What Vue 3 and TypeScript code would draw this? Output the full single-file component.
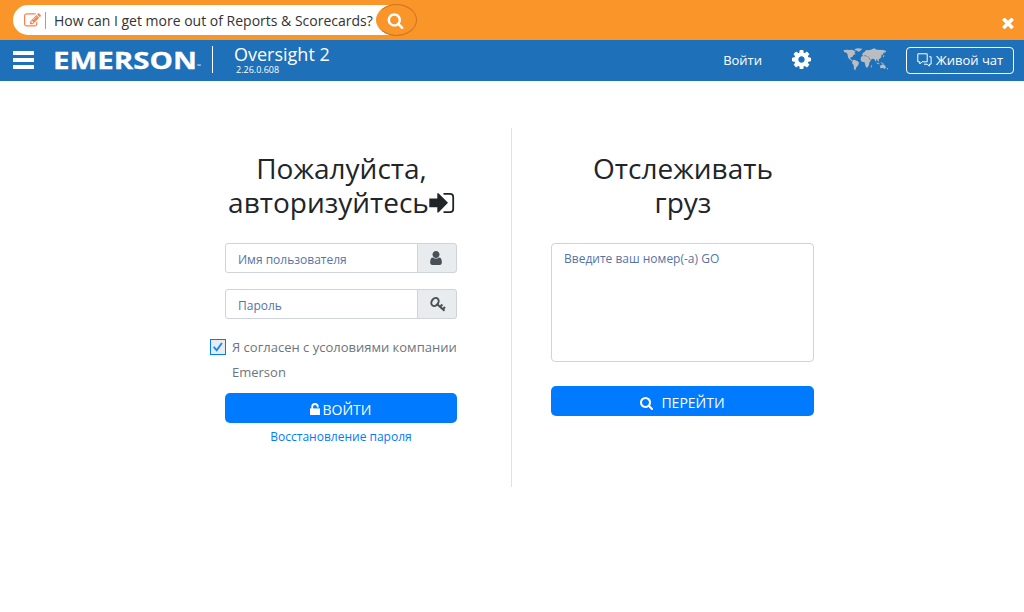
<script setup lang="ts">
import { ref } from 'vue'

const username = ref('')
const password = ref('')
const shipmentNumbers = ref('')
const agreed = ref(true)
const bannerOpen = ref(true)

const icons = {
  search: 'M1216 832q0-185-131.5-316.5t-316.5-131.5-316.5 131.5-131.5 316.5 131.5 316.5 316.5 131.5 316.5-131.5 131.5-316.5zm512 832q0 52-38 90t-90 38q-54 0-90-38l-343-342q-179 124-399 124-143 0-273.5-55.5t-225-150-150-225-55.5-273.5 55.5-273.5 150-225 225-150 273.5-55.5 273.5 55.5 225 150 150 225 55.5 273.5q0 220-124 399l343 343q37 37 37 90z',
  cog: 'M1152 896q0-106-75-181t-181-75-181 75-75 181 75 181 181 75 181-75 75-181zm512-109v222q0 12-8 23t-20 13l-185 28q-19 54-39 91 35 50 107 138 10 12 10 25t-9 23q-27 37-99 108t-94 71q-12 0-26-9l-138-108q-44 23-91 38-16 136-29 186-7 28-36 28h-222q-14 0-24.5-8.5t-11.5-21.5l-28-184q-49-16-90-37l-141 107q-10 9-25 9-14 0-25-11-126-114-165-168-7-10-7-23 0-12 8-23 15-21 51-66.5t54-70.5q-27-50-41-99l-183-27q-13-2-21-12.5t-8-23.5v-222q0-12 8-23t19-13l186-28q14-46 39-92-40-57-107-138-10-12-10-24 0-10 9-23 26-36 98.5-107.5t94.5-71.5q13 0 26 10l138 107q44-23 91-38 16-136 29-186 7-28 36-28h222q14 0 24.5 8.5t11.5 21.5l28 184q49 16 90 37l142-107q9-9 24-9 13 0 25 10 129 119 165 170 7 8 7 22 0 12-8 23-15 21-51 66.5t-54 70.5q26 50 41 98l183 28q13 2 21 12.5t8 23.5z',
  times: 'M1490 1322q0 40-28 68l-136 136q-28 28-68 28t-68-28l-294-294-294 294q-28 28-68 28t-68-28l-136-136q-28-28-28-68t28-68l294-294-294-294q-28-28-28-68t28-68l136-136q28-28 68-28t68 28l294 294 294-294q28-28 68-28t68 28l136 136q28 28 28 68t-28 68l-294 294 294 294q28 28 28 68z',
  user: 'M1536 1399q0 109-62.5 187t-150.5 78h-854q-88 0-150.5-78t-62.5-187q0-85 8.5-160.5t31.5-152 58.5-131 94-89 134.5-34.5q131 128 313 128t313-128q76 0 134.5 34.5t94 89 58.5 131 31.5 152 8.5 160.5zm-256-887q0 159-112.5 271.5t-271.5 112.5-271.5-112.5-112.5-271.5 112.5-271.5 271.5-112.5 271.5 112.5 112.5 271.5z',
  edit: 'M888 1184l116-116-152-152-116 116v56h96v96h56zm440-720q-16-16-33 1l-350 350q-17 17-1 33t33-1l350-350q17-17 1-33zm80 594v190q0 119-84.5 203.5t-203.5 84.5h-832q-119 0-203.5-84.5t-84.5-203.5v-832q0-119 84.5-203.5t203.5-84.5h832q63 0 117 25 15 7 18 23 3 17-9 29l-49 49q-14 14-32 8-23-6-45-6h-832q-66 0-113 47t-47 113v832q0 66 47 113t113 47h832q66 0 113-47t47-113v-126q0-13 9-22l64-64q15-15 35-7t20 29zm-96-738l288 288-672 672h-288v-288zm444 132l-92 92-288-288 92-92q28-28 68-28t68 28l152 152q28 28 28 68t-28 68z',
}
</script>

<template>
  <div class="page">
    <div v-if="bannerOpen" class="banner">
      <div class="ask">
        <svg class="edit-icon" viewBox="0 0 1792 1792"><path :d="icons.edit" /></svg>
        <span class="caret"></span>
        <span class="ask-text">How can I get more out of Reports &amp; Scorecards?</span>
      </div>
      <button class="ask-btn" aria-label="Search">
        <svg viewBox="0 0 1792 1792"><path :d="icons.search" /></svg>
      </button>
      <button class="close-btn" aria-label="Close" @click="bannerOpen = false">
        <svg viewBox="302 386 1188 1168"><path :d="icons.times" /></svg>
      </button>
    </div>

    <header class="nav">
      <button class="burger" aria-label="Menu"><i></i><i></i><i></i></button>
      <svg class="logo" width="152" height="36" viewBox="0 0 152 36">
        <text class="logo-name" x="0" y="26.5" textLength="144" lengthAdjust="spacingAndGlyphs">EMERSON</text>
        <text class="logo-tm" x="144" y="26">™</text>
      </svg>
      <div class="product">
        <span class="product-name">Oversight 2</span>
        <span class="version">2.26.0.608</span>
      </div>
      <a class="nav-login">Войти</a>
      <svg class="cog" viewBox="128 128 1536 1536"><path :d="icons.cog" /></svg>
      <svg class="map" viewBox="24 24 138 72">
        <path d="M25 31l9-2 9 1 8-1 7 3 4 3-4 4 4 3-7 4-3 5-5 1-1 5 5 3 3 4-4-1-7-5-4-6-1-7-3-7-7-1z" />
        <path d="M58 28l9-3 15 1-4 5-7 5-4-4-6-1z" />
        <path d="M53 61l5-2 10 5 4 4-3 9-5 5-3 9-4-3-1-12-5-7z" />
        <path d="M78 51l5-3 12 1 5 2 5 9 3 1-5 7-1 7-5 8-4-1-3-9-1-6-9-2-3-6z" />
        <path d="M81 46l2-6 5-4 6-6 5 1 9-2 9-4 9 4 19 1 9 3-2 4-6 1-3 7-3-2-1 8-4 5-4 2 1 8-4-3-3-6-3 8-4-7-6-2-4 4-5-5-2-5-6-1-4-3-5 2z" />
        <path d="M124 67l4 2 7 2-2 2-7-2zM136 66l8 3 3 4-8-3z" />
        <path d="M135 77l8-4 5 1 5 8-3 5-6-3-8 1zM156 84l4 1-4 5z" />
        <path d="M144 52l2-8 2 1-1 7zM109 75l2 1-2 7-2-1z" />
      </svg>
      <button class="chat">
        <svg viewBox="0 0 15 14">
          <path d="M.8.8h9.4v8H5L2.8 11V8.8h-2zM12.2 3.8h1.9v7.4h-1.8v2l-2-2H7" />
        </svg>
        <span>Живой чат</span>
      </button>
    </header>

    <main class="content">
      <section class="login">
        <h1>Пожалуйста,<br />авторизуйтесь<svg class="signin" viewBox="0 0 26 22"><path d="M.3 6.5h8V1.2h1.2L19 10.8 9.5 20.5H8.300v-5.300H.3z" /><path class="door" d="M14.500 1.800H21q3.200 0 3.200 3.200v12q0 3.200-3.200 3.200h-6.500" /></svg></h1>
        <div class="field">
          <input v-model="username" type="text" placeholder="Имя пользователя" />
          <span class="addon"><svg class="user" viewBox="256 128 1280 1536"><path :d="icons.user" /></svg></span>
        </div>
        <div class="field">
          <input v-model="password" type="password" placeholder="Пароль" />
          <span class="addon">
            <svg class="key" viewBox="0 0 16 15"><ellipse cx="5" cy="5" rx="3.3" ry="4.3" transform="rotate(35 5 5)" /><path d="M7.2 7.200l7.300 6.600M10 9.800l2.400-2.300M12.700 12.300l2.300-2.300" /></svg>
          </span>
        </div>
        <label class="agree">
          <input v-model="agreed" type="checkbox" />
          <span class="box"><svg v-if="agreed" viewBox="0 0 14 14"><path d="M2.7 6.8l3 3.5 5.2-7.4" /></svg></span>
          <span>Я согласен с усоловиями компании Emerson</span>
        </label>
        <button class="primary">
          <svg class="lock" viewBox="0 0 10 12"><path d="M0 5.4h10V12H0z" /><path class="shackle" d="M2.2 6V3.8a2.8 2.8 0 0 1 5.6 0v.6" /></svg>
          <span>ВОЙТИ</span>
        </button>
        <a class="recover">Восстановление пароля</a>
      </section>

      <section class="track">
        <h1>Отслеживать<br />груз</h1>
        <textarea v-model="shipmentNumbers" placeholder="Введите ваш номер(-а) GO"></textarea>
        <button class="primary go">
          <svg class="find" viewBox="64 128 1664 1664"><path :d="icons.search" /></svg>
          <span>ПЕРЕЙТИ</span>
        </button>
      </section>
    </main>
  </div>
</template>

<style>
body {
  background: #fff;
}
</style>

<style scoped>
.page {
  height: 612px;
  overflow: hidden;
  font-family: 'Open Sans', 'Noto Sans', sans-serif;
  font-size: 13px;
  color: #212529;
}
.page * {
  box-sizing: border-box;
}
button {
  font: inherit;
  padding: 0;
  border: 0;
  background: none;
  cursor: pointer;
}
svg {
  display: block;
  fill: currentColor;
  flex: none;
}
.banner {
  display: flex;
  align-items: center;
  height: 40px;
  padding: 0 10px 0 13px;
  background: #f99529;
}
.ask {
  display: flex;
  align-items: center;
  width: 378px;
  height: 30px;
  padding-left: 11px;
  background: #fff;
  border-radius: 15px 0 0 15px;
}
.edit-icon {
  width: 17px;
  height: 17px;
  color: #f58250;
}
.caret {
  width: 1px;
  height: 17px;
  margin: 1px 8px 0 4px;
  background: #f58250;
}
.ask-text {
  font-size: 14px;
  white-space: nowrap;
  color: #333;
}
.ask-btn {
  display: flex;
  align-items: center;
  justify-content: center;
  width: 41px;
  height: 32px;
  margin-left: -15px;
  padding-right: 3px;
  border: 1px solid #c97721;
  border-left-color: #f99529;
  border-radius: 50%;
  background: #f99529;
  color: #fff;
}
.ask-btn svg {
  width: 17px;
  height: 17px;
}
.close-btn {
  margin: 6px 0 0 auto;
  color: #fff;
}
.close-btn svg {
  width: 12px;
  height: 11px;
}
.nav {
  display: flex;
  align-items: center;
  height: 41px;
  padding: 0 10px 1px 13px;
  background: #1e70b8;
  color: #fff;
}
.burger {
  display: flex;
  flex-direction: column;
  gap: 3px;
  width: 21px;
}
.burger i {
  height: 4px;
  background: #fff;
}
.logo {
  margin: 0 0 0 19px;
}
.logo-name {
  font-size: 24px;
  font-weight: 700;
  stroke: #fff;
  stroke-width: 0.3;
}
.logo-tm {
  font-size: 5px;
}
.product {
  display: flex;
  flex-direction: column;
  height: 27px;
  margin: 0 0 1px 7px;
  padding-left: 21px;
  border-left: 1px solid #fff;
}
.product-name {
  margin-top: -3px;
  font-size: 18px;
  line-height: 23px;
}
.version {
  margin: -1px 0 0 2px;
  font-size: 9px;
  line-height: 10px;
}
.nav-login {
  margin-left: auto;
}
.cog {
  width: 19px;
  height: 19px;
  margin: -2px 32px 0 30px;
}
.map {
  width: 46px;
  height: 24px;
  margin-top: -1px;
  color: #b9bcc0;
}
.chat {
  display: flex;
  align-items: center;
  justify-content: center;
  gap: 4px;
  width: 108px;
  height: 27px;
  margin: 1px 0 0 17px;
  padding-bottom: 1px;
  border: 1px solid #fff;
  border-radius: 4px;
  color: #fff;
}
.chat svg {
  width: 15px;
  height: 14px;
  fill: none;
  stroke: #fff;
}
.content {
  display: flex;
  padding: 47px 0 0 210px;
}
.login {
  width: 302px;
  height: 359px;
  padding: 23px 54px 0 15px;
  border-right: 1px solid #dee2e6;
}
.track {
  width: 302px;
  padding: 23px 0 0 39px;
}
h1 {
  margin: 0 0 24px;
  padding-left: 1px;
  font-size: 28px;
  font-weight: 400;
  line-height: 34px;
  text-align: center;
  white-space: nowrap;
}
.signin {
  display: inline-block;
  width: 26px;
  height: 22px;
  vertical-align: -1px;
}
.door {
  fill: none;
  stroke: currentColor;
  stroke-width: 1.8;
}
.field {
  display: flex;
  height: 30px;
  margin-bottom: 16px;
}
.field input {
  flex: 1;
  min-width: 0;
  padding: 3px 12px 0;
  border: 1px solid #ced4da;
  border-radius: 3px 0 0 3px;
  outline: 0;
  font: 12px 'Open Sans', 'Noto Sans', sans-serif;
}
.addon {
  display: flex;
  align-items: center;
  width: 40px;
  margin-left: -1px;
  padding-left: 12px;
  border: 1px solid #ced4da;
  border-radius: 0 3px 3px 0;
  background: #e9ecef;
  color: #495057;
}
.user {
  width: 12px;
  height: 14px;
}
.key {
  width: 16px;
  height: 15px;
  fill: none;
  stroke: currentColor;
  stroke-width: 2;
}
::placeholder {
  color: #5673a6;
  opacity: 1;
}
.agree {
  display: flex;
  gap: 6px;
  width: 260px;
  margin: 0 0 8px -15px;
  font-size: 13px;
  line-height: 25px;
  color: #6c757d;
}
.agree > span:last-child {
  width: 230px;
}
.agree input {
  display: none;
}
.box {
  flex: none;
  width: 16px;
  height: 16px;
  margin-top: 4px;
  border: 1px solid #007bff;
  background: #e9ecef;
}
.box svg {
  width: 14px;
  height: 14px;
  fill: none;
  stroke: #1583f5;
  stroke-width: 1.8;
}
.primary {
  display: flex;
  align-items: center;
  justify-content: center;
  gap: 3px;
  width: 100%;
  height: 30px;
  padding-top: 3px;
  border-radius: 5px;
  background: #007bff;
  color: #fff;
  font-size: 14px;
}
.lock {
  width: 10px;
  height: 12px;
  margin: -2px 0 0 -1px;
}
.shackle {
  fill: none;
  stroke: currentColor;
  stroke-width: 1.8;
}
.recover {
  display: block;
  margin-top: 5px;
  font-size: 12px;
  line-height: 17px;
  text-align: center;
  color: #007bff;
}
.track textarea {
  display: block;
  width: 263px;
  height: 119px;
  margin-bottom: 24px;
  padding: 6px 12px;
  border: 1px solid #ced4da;
  border-radius: 4px;
  outline: 0;
  resize: none;
  font: 12px/18px 'Open Sans', 'Noto Sans', sans-serif;
}
.go {
  gap: 8px;
}
.find {
  width: 13px;
  height: 13px;
  margin-top: 1px;
}
</style>
